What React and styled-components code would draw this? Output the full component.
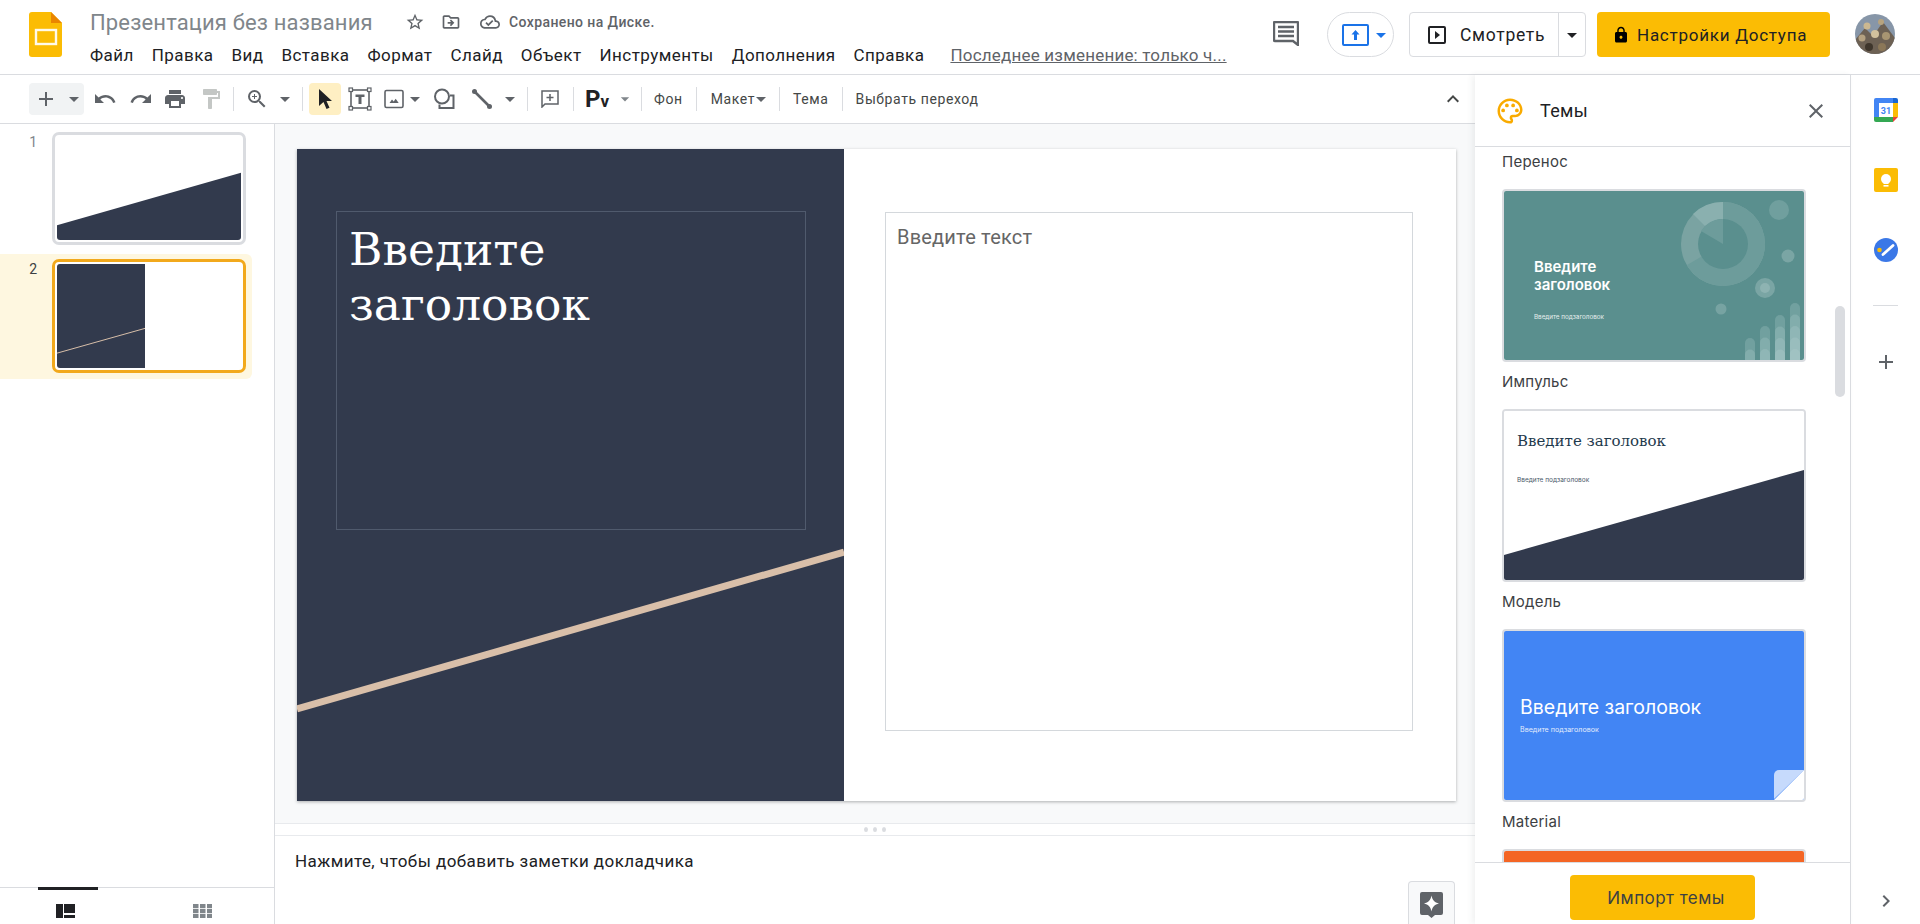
import React from 'react';
import styled, {createGlobalStyle} from 'styled-components';
import {
    MdAdd, MdUndo, MdRedo, MdPrint, MdFormatPaint, MdZoomIn, MdArrowDropDown, MdLock, MdClose,
    MdExpandLess, MdChevronRight, MdStarBorder, MdOutlineDriveFileMove, MdOutlineCloudDone, MdOutlinePalette
} from 'react-icons/md';

const GlobalStyle = createGlobalStyle`
    html, body {
        margin:0;
        padding:0;
        background:#fff;
        font-family:Roboto, "Liberation Sans", sans-serif;
        overflow:hidden;
    }
`;

const Page = styled.div`
    width:1920px;
    height:924px;
    display:flex;
    flex-direction:column;
    overflow:hidden;
    color:#202124;
`;

/* header */
const Header = styled.header`
    height:75px;
    box-sizing:border-box;
    border-bottom:1px solid #dadce0;
    display:flex;
    padding:12px 25px 0 29px;
    flex-shrink:0;
`;

const LogoMark = styled.svg`
    width:33px;
    height:45px;
    flex-shrink:0;
    margin-right:28px;
`;

const Titles = styled.div`
    display:flex;
    flex-direction:column;
    margin-top:-4px;
`;

const TitleRow = styled.div`
    height:28px;
    display:flex;
    align-items:center;
    color:#5f6368;
`;

const DocTitle = styled.div`
    font-size:22px;
    color:#80868b;
    letter-spacing:0.15px;
    width:282px;
    white-space:nowrap;
`;

const TitleIcon = styled.span`
    display:flex;
    margin-left:${p=>p.$ml}px;
    font-size:22px;
    width:20px;
    justify-content:center;
`;

const SavedText = styled.div`
    margin-left:9px;
    font-size:14px;
    font-weight:500;
    letter-spacing:0.4px;
    color:#5f6368;
    white-space:nowrap;
`;

const MenuBar = styled.nav`
    display:flex;
    align-items:center;
    gap:18px;
    margin-top:8px;
    height:22px;
    font-size:17px;
    letter-spacing:0.44px;
    white-space:nowrap;
`;

const LastEdit = styled.span`
    margin-left:8px;
    color:#5f6368;
    letter-spacing:0.2px;
    text-decoration:underline;
`;

const HeaderRight = styled.div`
    margin-left:auto;
    display:flex;
    align-items:flex-start;
`;

const ChatIcon = styled.svg`
    width:26px;
    height:25px;
    margin-top:9px;
`;

const PresentPill = styled.div`
    width:67px;
    height:45px;
    box-sizing:border-box;
    margin-left:28px;
    border:1px solid #dadce0;
    border-radius:23px;
    display:flex;
    align-items:center;
    padding-left:14px;
    color:#1a73e8;
    font-size:24px;
`;

const WatchButton = styled.div`
    width:177px;
    height:45px;
    box-sizing:border-box;
    margin-left:15px;
    border:1px solid #dadce0;
    border-radius:4px;
    display:flex;
    align-items:center;
    font-size:17.5px;
    letter-spacing:0.7px;
    color:#202124;
`;

const WatchMain = styled.div`
    width:149px;
    height:100%;
    box-sizing:border-box;
    display:flex;
    align-items:center;
    padding-left:18px;
    gap:14px;
    border-right:1px solid #dadce0;
`;

const WatchCaret = styled.div`
    flex:1;
    display:flex;
    justify-content:center;
    font-size:24px;
    color:#202124;
`;

const ShareButton = styled.div`
    width:233px;
    height:45px;
    box-sizing:border-box;
    margin-left:11px;
    background:#fbbc04;
    border-radius:4px;
    display:flex;
    align-items:center;
    padding-left:15px;
    gap:7px;
    font-size:17px;
    letter-spacing:0.75px;
    color:#202124;
    svg { font-size:18px; color:#000; flex-shrink:0; }
`;

const Avatar = styled.svg`
    width:40px;
    height:40px;
    margin:2px 0 0 25px;
    border-radius:50%;
`;

/* body */
const Body = styled.div`
    flex:1;
    display:flex;
    min-height:0;
`;

const MainColumn = styled.div`
    width:1475px;
    display:flex;
    flex-direction:column;
    flex-shrink:0;
`;

const Toolbar = styled.div`
    height:49px;
    box-sizing:border-box;
    flex-shrink:0;
    border-bottom:1px solid #dadce0;
    display:flex;
    align-items:center;
    padding:0 10px 0 29px;
    color:#5f6368;
    font-size:14px;
`;

const AddGroup = styled.div`
    display:flex;
    align-items:center;
    height:32px;
    margin-right:2px;
    background:#f1f3f4;
    border-radius:4px;
`;

const Tool = styled.div`
    width:${p=>p.$w}px;
    height:32px;
    display:flex;
    align-items:center;
    justify-content:center;
    flex-shrink:0;
    font-size:${p=>p.$size||24}px;
    color:${p=>p.$color||'#5f6368'};
    background:${p=>p.$active?'#feefc3':'transparent'};
    border-radius:4px;
    svg { flex-shrink:0; }
`;

const Sep = styled.div`
    width:1px;
    height:24px;
    background:#dadce0;
    flex-shrink:0;
    margin:0 ${p=>p.$r}px 0 ${p=>p.$l}px;
`;

const ToolText = styled.div`
    font-size:14px;
    color:#444746;
    letter-spacing:0.6px;
    white-space:nowrap;
`;

const FormatLetters = styled.span`
    font-size:24px;
    font-weight:700;
    line-height:1;
    color:#202124;
    small { font-size:17px; }
`;

const CollapseTool = styled.div`
    margin-left:auto;
    display:flex;
    font-size:24px;
    color:#444746;
`;

const Workspace = styled.div`
    flex:1;
    display:flex;
    min-height:0;
`;

const Filmstrip = styled.aside`
    width:275px;
    box-sizing:border-box;
    flex-shrink:0;
    border-right:1px solid #dadce0;
    display:flex;
    flex-direction:column;
`;

const FilmList = styled.div`
    flex:1;
    padding-top:3px;
    display:flex;
    flex-direction:column;
    gap:4px;
`;

const FilmRow = styled.div`
    width:252px;
    box-sizing:border-box;
    display:flex;
    padding:5px 0 ${p=>p.$active?6:5}px 0;
    background:${p=>p.$active?'#fef7e0':'transparent'};
    border-radius:0 6px 6px 0;
`;

const FilmNumber = styled.div`
    width:52px;
    box-sizing:border-box;
    padding-right:15px;
    margin-top:2px;
    text-align:right;
    font-size:14px;
    line-height:16px;
    color:${p=>p.$active?'#3c4043':'#80868b'};
`;

const Thumb = styled.div`
    width:194px;
    height:${p=>p.$active?114:113}px;
    box-sizing:border-box;
    border:3px solid ${p=>p.$active?'#f2a91c':'#dadce0'};
    border-radius:7px;
    padding:2px;
    background:#fff;
    svg { display:block; width:100%; height:100%; border-radius:3px; }
`;

const ViewTabs = styled.div`
    height:37px;
    box-sizing:border-box;
    border-top:1px solid #dadce0;
    display:flex;
    flex-shrink:0;
`;

const ViewTab = styled.div`
    flex:1;
    box-sizing:border-box;
    position:relative;
    display:flex;
    justify-content:center;
    padding:16px 6px 0 0;
    color:${p=>p.$active?'#202124':'#80868b'};
    &::before {
        content:"";
        display:${p=>p.$active?'block':'none'};
        position:absolute;
        left:38px;
        top:-1px;
        width:60px;
        height:3px;
        background:#202124;
    }
    svg { width:19px; height:14px; }
`;

const Editor = styled.div`
    flex:1;
    display:flex;
    flex-direction:column;
    min-width:0;
`;

const Canvas = styled.div`
    height:700px;
    box-sizing:border-box;
    flex-shrink:0;
    background:#f8f9fa;
    padding:25px 0 0 22px;
    border-bottom:1px solid #e8eaed;
`;

const Slide = styled.div`
    width:1159px;
    height:652px;
    display:flex;
    background:#fff;
    box-shadow:0 1px 3px rgba(60,64,67,.4);
`;

const DarkPane = styled.div`
    position:relative;
    width:547px;
    box-sizing:border-box;
    background:#323a4d;
    padding:62px 0 0 39px;
    overflow:hidden;
`;

const Stripe = styled.svg`
    position:absolute;
    left:0;
    top:0;
    width:547px;
    height:652px;
`;

const TitleBox = styled.div`
    width:470px;
    height:319px;
    box-sizing:border-box;
    border:1px solid #505a6d;
    padding:10px 0 0 12px;
    font-family:"DejaVu Serif", serif;
    font-size:45.5px;
    line-height:55px;
    color:#fff;
`;

const LightPane = styled.div`
    flex:1;
    padding:63px 0 0 41px;
`;

const TextBox = styled.div`
    width:528px;
    height:519px;
    box-sizing:border-box;
    border:1px solid #d4d8dc;
    padding:11px 0 0 11px;
    font-size:20px;
    line-height:26px;
    letter-spacing:0.2px;
    color:#666;
`;

const ResizeBar = styled.div`
    height:11px;
    flex-shrink:0;
    display:flex;
    align-items:center;
    justify-content:center;
    gap:5px;
    border-bottom:1px solid #e8eaed;
`;

const ResizeDot = styled.span`
    width:4px;
    height:5px;
    border-radius:50%;
    background:#dadce0;
`;

const Notes = styled.div`
    flex:1;
    position:relative;
    padding:14px 0 0 20px;
    font-size:17px;
    line-height:22px;
    letter-spacing:0.43px;
`;

const AssistButton = styled.div`
    position:absolute;
    right:20px;
    bottom:0;
    width:47px;
    height:43px;
    box-sizing:border-box;
    border:1px solid #dadce0;
    border-bottom:none;
    border-radius:4px 4px 0 0;
    background:#f8f9fa;
    display:flex;
    justify-content:center;
    padding-top:10px;
    svg { width:23px; height:26px; }
`;

/* themes */
const ThemePanel = styled.section`
    width:376px;
    box-sizing:border-box;
    flex-shrink:0;
    border-right:1px solid #dadce0;
    display:flex;
    flex-direction:column;
    position:relative;
    background:#fff;
    box-shadow:-3px 0 6px rgba(60,64,67,.07);
`;

const PanelHead = styled.div`
    height:72px;
    box-sizing:border-box;
    flex-shrink:0;
    border-bottom:1px solid #dadce0;
    display:flex;
    align-items:center;
    padding:0 22px 0 20px;
    font-size:18px;
    letter-spacing:0.3px;
    svg { flex-shrink:0; }
`;

const PanelTitle = styled.div`
    margin-left:15px;
    flex:1;
`;

const ThemeList = styled.div`
    flex:1;
    min-height:0;
    overflow:hidden;
    padding:5px 0 0 27px;
`;

const ThemeItem = styled.div`
    width:304px;
    margin-bottom:10px;
`;

const ThemeName = styled.div`
    height:20px;
    margin-bottom:17px;
    font-family:Inter, Roboto, sans-serif;
    font-size:15px;
    letter-spacing:0.25px;
    line-height:20px;
    color:#3c4043;
`;

const ThemeCard = styled.div`
    height:173px;
    box-sizing:border-box;
    border:2px solid #dadce0;
    border-radius:4px;
    overflow:hidden;
    background:#fff;
`;

const Preview = styled.div`
    position:relative;
    height:100%;
    box-sizing:border-box;
    overflow:hidden;
    background:${p=>p.$bg};
    color:${p=>p.$fg};
    padding:${p=>p.$pad};
`;

const PreviewArt = styled.svg`
    position:absolute;
    left:0;
    top:0;
    width:300px;
    height:169px;
`;

const PreviewTitle = styled.div`
    position:relative;
    font-family:${p=>p.$serif?'"DejaVu Serif", serif':'Inter, Roboto, sans-serif'};
    font-size:${p=>p.$size}px;
    font-weight:${p=>p.$weight||400};
    line-height:${p=>p.$line}px;
    white-space:nowrap;
`;

const PreviewSub = styled.div`
    position:relative;
    margin-top:${p=>p.$mt}px;
    font-family:Inter, Roboto, sans-serif;
    font-size:${p=>p.$size}px;
    line-height:10px;
    opacity:.85;
    white-space:nowrap;
`;

const ScrollThumb = styled.div`
    position:absolute;
    left:360px;
    top:231px;
    width:10px;
    height:91px;
    border-radius:5px;
    background:#dadce0;
`;

const PanelFoot = styled.div`
    height:62px;
    box-sizing:border-box;
    flex-shrink:0;
    border-top:1px solid #dadce0;
    display:flex;
    justify-content:center;
    padding:12px 0 0 0;
`;

const ImportButton = styled.div`
    width:185px;
    height:45px;
    box-sizing:border-box;
    padding-left:7px;
    border-radius:4px;
    background:#fbbc04;
    display:flex;
    align-items:center;
    justify-content:center;
    font-family:Inter, Roboto, sans-serif;
    font-size:17px;
    letter-spacing:0.45px;
    color:#3c4043;
`;

const Rail = styled.div`
    flex:1;
    display:flex;
    flex-direction:column;
    align-items:center;
    padding:23px 0 11px;
    box-sizing:border-box;
`;

const RailIcon = styled.svg`
    width:24px;
    height:24px;
    margin-top:${p=>p.$mt||0}px;
    flex-shrink:0;
`;

const RailRule = styled.div`
    width:25px;
    height:1px;
    margin-top:43px;
    background:#dadce0;
`;

const RailChevron = styled.div`
    margin-top:auto;
    display:flex;
    font-size:24px;
    color:#5f6368;
`;

const CalendarDay = styled.text`
    font-family:Roboto, sans-serif;
    font-size:9px;
    font-weight:700;
    fill:#4285f4;
`;

const SlidesLogo = () => (
    <LogoMark viewBox="0 0 33 45">
        <path d="M3 0h19l11 11v31a3 3 0 0 1-3 3H3a3 3 0 0 1-3-3V3a3 3 0 0 1 3-3z" fill="#fbbc04"/>
        <path d="M22 0l11 11H22z" fill="#ea8600"/>
        <rect x="7" y="18" width="20" height="14" fill="none" stroke="#fff" strokeWidth="2.4" opacity=".92"/>
    </LogoMark>
);

const CommentsGlyph = () => (
    <ChatIcon viewBox="0 0 26 25">
        <path d="M2 1h22a1 1 0 0 1 1 1v22l-5-4H2a1 1 0 0 1-1-1V2a1 1 0 0 1 1-1z" fill="none" stroke="#5f6368" strokeWidth="2.4"/>
        <path d="M5 6h16M5 10.500h16M5 15h16" stroke="#5f6368" strokeWidth="2.4"/>
    </ChatIcon>
);

const PresentGlyph = () => (
    <svg width="27" height="22" viewBox="0 0 27 22">
        <rect x="1" y="1" width="25" height="20" rx="1" fill="none" stroke="#1a73e8" strokeWidth="2"/>
        <path d="M13.500 6l4 4.500h-2.500V16h-3v-5.500H9.500z" fill="#1a73e8"/>
    </svg>
);

const PlayGlyph = () => (
    <svg width="18" height="18" viewBox="0 0 18 18">
        <rect x="1" y="1" width="16" height="16" rx="1" fill="none" stroke="#202124" strokeWidth="2"/>
        <path d="M7 5l5 4-5 4z" fill="#202124"/>
    </svg>
);

const PhotoAvatar = () => (
    <Avatar viewBox="0 0 40 40">
        <rect width="40" height="40" fill="#8796a8"/>
        <path d="M0 26 10 14l8 8 10-14 12 16v16H0z" fill="#6d6154"/>
        <circle cx="12" cy="12" r="3.500" fill="#cbb891"/>
        <circle cx="26" cy="8" r="3" fill="#b7a37e"/>
        <circle cx="20" cy="20" r="4" fill="#d2c19d"/>
        <circle cx="7" cy="24" r="3.500" fill="#b5a180"/>
        <circle cx="31" cy="22" r="4" fill="#a89572"/>
        <circle cx="14" cy="33" r="4" fill="#3f362c"/>
        <circle cx="27" cy="33" r="4" fill="#8b7758"/>
    </Avatar>
);

const CursorGlyph = () => (
    <svg width="22" height="24" viewBox="0 0 22 24">
        <path d="M5 2v17l4.500-4 3 7 3-1.300-3-6.700H18z" fill="#202124"/>
    </svg>
);

const TextBoxGlyph = () => (
    <svg width="24" height="24" viewBox="0 0 24 24" fill="none">
        <rect x="3" y="3" width="18" height="18" stroke="#5f6368" strokeWidth="1.600"/>
        <g fill="#fff" stroke="#5f6368" strokeWidth="1.200">
            <rect x="1" y="1" width="3.500" height="3.500"/>
            <rect x="19.500" y="1" width="3.500" height="3.500"/>
            <rect x="1" y="19.500" width="3.500" height="3.500"/>
            <rect x="19.500" y="19.500" width="3.500" height="3.500"/>
        </g>
        <path d="M7.500 7.500h9v2.500h-3v7h-3v-7h-3z" fill="#5f6368"/>
    </svg>
);

const ImageGlyph = () => (
    <svg width="20" height="20" viewBox="0 0 20 20" fill="none">
        <rect x="1" y="1.500" width="18" height="17" rx="1.500" stroke="#5f6368" strokeWidth="1.600"/>
        <path d="M5.500 14l2.500-3.500 1.700 2 2-2.800 3 4.300z" fill="#5f6368"/>
    </svg>
);

const ShapeGlyph = () => (
    <svg width="22" height="24" viewBox="0 0 22 24" fill="none">
        <circle cx="9" cy="9.500" r="7" stroke="#5f6368" strokeWidth="2"/>
        <path d="M17 8.500h3.500V21H6.500v-3.500" stroke="#5f6368" strokeWidth="2"/>
    </svg>
);

const LineGlyph = () => (
    <svg width="22" height="22" viewBox="0 0 22 22">
        <path d="M3.500 3.500l15 15" stroke="#5f6368" strokeWidth="2.600"/>
        <circle cx="3.500" cy="3.500" r="2.500" fill="#5f6368"/>
        <circle cx="18.500" cy="18.500" r="2.500" fill="#5f6368"/>
    </svg>
);

const AddCommentGlyph = () => (
    <svg width="18" height="18" viewBox="0 0 18 18" fill="none">
        <path d="M1 1h16v13H4l-3 3z" stroke="#5f6368" strokeWidth="1.500"/>
        <path d="M9 4v7M5.500 7.500h7" stroke="#5f6368" strokeWidth="1.500"/>
    </svg>
);

const PaletteGlyph = () => (
    <MdOutlinePalette size={30} color="#f9ab00"/>
);

const FilmstripViewGlyph = () => (
    <svg viewBox="0 0 19 14" fill="currentColor">
        <rect x="0" y="0" width="7" height="14"/>
        <rect x="8" y="0" width="11" height="9"/>
        <rect x="8" y="11" width="11" height="3"/>
    </svg>
);

const GridViewGlyph = () => (
    <svg viewBox="0 0 19 14" fill="currentColor">
        {[0,7,14].map(x=>[0,5,10].map(y=>(
            <rect key={x+'-'+y} x={x} y={y} width="5.500" height={4.200}/>
        )))}
    </svg>
);

const AssistGlyph = () => (
    <svg viewBox="0 0 23 26">
        <path d="M2 0h19a2 2 0 0 1 2 2v19a2 2 0 0 1-2 2h-6l-3.500 3L8 23H2a2 2 0 0 1-2-2V2a2 2 0 0 1 2-2z" fill="#5f6368"/>
        <path d="M11.500 3.500c.8 4.500 3 7 7.500 8-4.500 1-6.700 3.500-7.500 8-.8-4.500-3-7-7.500-8 4.500-1 6.700-3.500 7.500-8z" fill="#fff"/>
    </svg>
);

const CalendarGlyph = () => (
    <RailIcon viewBox="0 0 24 24">
        <path d="M2 0h20v5H5v14H0V2a2 2 0 0 1 2-2z" fill="#4285f4"/>
        <path d="M19 0h3a2 2 0 0 1 2 2v3h-5z" fill="#1967d2"/>
        <path d="M19 5h5v14h-5z" fill="#fbbc04"/>
        <path d="M5 19h14v5H2a2 2 0 0 1-2-2v-3z" fill="#34a853"/>
        <path d="M19 19h5l-5 5z" fill="#ea4335"/>
        <CalendarDay x="12" y="15.500" textAnchor="middle">31</CalendarDay>
    </RailIcon>
);

const KeepGlyph = () => (
    <RailIcon $mt={46} viewBox="0 0 24 24">
        <rect width="24" height="24" rx="2" fill="#fbbc04"/>
        <circle cx="12" cy="11" r="5" fill="#fff"/>
        <rect x="9.500" y="14" width="5" height="2" fill="#fff"/>
        <rect x="9.500" y="17" width="5" height="1.600" fill="#fff"/>
    </RailIcon>
);

const TasksGlyph = () => (
    <RailIcon $mt={46} viewBox="0 0 24 24">
        <circle cx="12" cy="12" r="12" fill="#3b78e7"/>
        <path d="M9 16.500L19 7.500" stroke="#fff" strokeWidth="2.800" strokeLinecap="round"/>
        <circle cx="5.500" cy="12" r="2.300" fill="#fbbc04"/>
    </RailIcon>
);

const PULSE_BARS = [[241,147],[256,135],[271,124],[286,112]];

const PulseArt = () => (
    <PreviewArt viewBox="0 0 300 169">
        <circle cx="219" cy="53" r="42" fill="#7aa3a2"/>
        <path d="M219 11a42 42 0 0 1 0 84 42 42 0 0 1-36-21l36-21z" fill="#6d9c9b"/>
        <path d="M219 11a42 42 0 0 0-30 12l30 30z" fill="#8ab0af"/>
        <circle cx="219" cy="53" r="25" fill="#5a8f8e"/>
        <path d="M219 28v25l-22-13a25 25 0 0 1 22-12z" fill="#6d9c9b"/>
        <circle cx="275" cy="19" r="10" fill="#709f9e"/>
        <circle cx="284" cy="65" r="6.500" fill="#7aa5a4"/>
        <circle cx="261" cy="97" r="10" fill="#7aa5a4"/>
        <circle cx="261" cy="97" r="5" fill="#8eb3b2"/>
        <circle cx="217" cy="118" r="5.500" fill="#77a3a2"/>
        {PULSE_BARS.map(([x,top])=>{
            const bands=[];
            for(let y=top;y<169;y+=11.5) bands.push(y);
            return bands.map(y=>(
                <rect key={x+'-'+y} x={x} y={y} width="10" height={175-y} rx="5" fill="#b9d4d2" opacity=".25"/>
            ));
        })}
    </PreviewArt>
);

const ModelArt = () => (
    <PreviewArt viewBox="0 0 300 169">
        <path d="M0 144L300 59v110H0z" fill="#323a4d"/>
    </PreviewArt>
);

const MaterialArt = () => (
    <PreviewArt viewBox="0 0 300 169">
        <path d="M270 168v-24a5 5 0 0 1 5-5h25z" fill="#c6dafc"/>
        <path d="M270 169l30-30v30z" fill="#fff"/>
    </PreviewArt>
);

function App(){
    return(
        <Page>
            <GlobalStyle/>
            <Header>
                <SlidesLogo/>
                <Titles>
                    <TitleRow>
                        <DocTitle>Презентация без названия</DocTitle>
                        <TitleIcon $ml={33}><MdStarBorder/></TitleIcon>
                        <TitleIcon $ml={16}><MdOutlineDriveFileMove/></TitleIcon>
                        <TitleIcon $ml={19}><MdOutlineCloudDone/></TitleIcon>
                        <SavedText>Сохранено на Диске.</SavedText>
                    </TitleRow>
                    <MenuBar>
                        <span>Файл</span>
                        <span>Правка</span>
                        <span>Вид</span>
                        <span>Вставка</span>
                        <span>Формат</span>
                        <span>Слайд</span>
                        <span>Объект</span>
                        <span>Инструменты</span>
                        <span>Дополнения</span>
                        <span>Справка</span>
                        <LastEdit>Последнее изменение: только ч...</LastEdit>
                    </MenuBar>
                </Titles>
                <HeaderRight>
                    <CommentsGlyph/>
                    <PresentPill><PresentGlyph/><MdArrowDropDown/></PresentPill>
                    <WatchButton>
                        <WatchMain><PlayGlyph/>Смотреть</WatchMain>
                        <WatchCaret><MdArrowDropDown/></WatchCaret>
                    </WatchButton>
                    <ShareButton><MdLock/>Настройки Доступа</ShareButton>
                    <PhotoAvatar/>
                </HeaderRight>
            </Header>
            <Body>
                <MainColumn>
                    <Toolbar>
                        <AddGroup>
                            <Tool $w={34}><MdAdd/></Tool>
                            <Tool $w={21}><MdArrowDropDown/></Tool>
                        </AddGroup>
                        <Tool $w={38}><MdUndo/></Tool>
                        <Tool $w={34}><MdRedo/></Tool>
                        <Tool $w={34}><MdPrint/></Tool>
                        <Tool $w={38} $color="#c4c7c5"><MdFormatPaint/></Tool>
                        <Sep $l={3} $r={2}/>
                        <Tool $w={42}><MdZoomIn/></Tool>
                        <Tool $w={14}><MdArrowDropDown/></Tool>
                        <Sep $l={10} $r={6}/>
                        <Tool $w={32} $active><CursorGlyph/></Tool>
                        <Tool $w={38}><TextBoxGlyph/></Tool>
                        <Tool $w={30}><ImageGlyph/></Tool>
                        <Tool $w={12}><MdArrowDropDown/></Tool>
                        <Tool $w={46}><ShapeGlyph/></Tool>
                        <Tool $w={30}><LineGlyph/></Tool>
                        <Tool $w={26}><MdArrowDropDown/></Tool>
                        <Sep $l={4} $r={4}/>
                        <Tool $w={36}><AddCommentGlyph/></Tool>
                        <Sep $l={5} $r={5}/>
                        <Tool $w={36}><FormatLetters>P<small>v</small></FormatLetters></Tool>
                        <Tool $w={20} $color="#80868b" $size={20}><MdArrowDropDown/></Tool>
                        <Sep $l={6} $r={12}/>
                        <ToolText>Фон</ToolText>
                        <Sep $l={13} $r={14}/>
                        <ToolText>Макет</ToolText>
                        <Tool $w={12}><MdArrowDropDown/></Tool>
                        <Sep $l={12} $r={13}/>
                        <ToolText>Тема</ToolText>
                        <Sep $l={13} $r={13}/>
                        <ToolText>Выбрать переход</ToolText>
                        <CollapseTool><MdExpandLess/></CollapseTool>
                    </Toolbar>
                    <Workspace>
                        <Filmstrip>
                            <FilmList>
                                <FilmRow>
                                    <FilmNumber>1</FilmNumber>
                                    <Thumb>
                                        <svg viewBox="0 0 184 104" preserveAspectRatio="none">
                                            <path d="M0 89L184 36v68H0z" fill="#323a4d"/>
                                        </svg>
                                    </Thumb>
                                </FilmRow>
                                <FilmRow $active>
                                    <FilmNumber $active>2</FilmNumber>
                                    <Thumb $active>
                                        <svg viewBox="0 0 184 105" preserveAspectRatio="none">
                                            <rect width="88" height="105" fill="#323a4d"/>
                                            <path d="M0 90L88 65" stroke="#d9bfa9" strokeWidth="1"/>
                                        </svg>
                                    </Thumb>
                                </FilmRow>
                            </FilmList>
                            <ViewTabs>
                                <ViewTab $active><FilmstripViewGlyph/></ViewTab>
                                <ViewTab><GridViewGlyph/></ViewTab>
                            </ViewTabs>
                        </Filmstrip>
                        <Editor>
                            <Canvas>
                                <Slide>
                                    <DarkPane>
                                        <Stripe viewBox="0 0 547 652">
                                            <path d="M0 560L547 403" stroke="#d9bfa9" strokeWidth="7"/>
                                        </Stripe>
                                        <TitleBox>Введите<br/>заголовок</TitleBox>
                                    </DarkPane>
                                    <LightPane>
                                        <TextBox>Введите текст</TextBox>
                                    </LightPane>
                                </Slide>
                            </Canvas>
                            <ResizeBar><ResizeDot/><ResizeDot/><ResizeDot/></ResizeBar>
                            <Notes>
                                Нажмите, чтобы добавить заметки докладчика
                                <AssistButton><AssistGlyph/></AssistButton>
                            </Notes>
                        </Editor>
                    </Workspace>
                </MainColumn>
                <ThemePanel>
                    <PanelHead>
                        <PaletteGlyph/>
                        <PanelTitle>Темы</PanelTitle>
                        <MdClose size={24} color="#5f6368"/>
                    </PanelHead>
                    <ThemeList>
                        <ThemeItem>
                            <ThemeName>Перенос</ThemeName>
                            <ThemeCard>
                                <Preview $bg="#5a8f8e" $fg="#fff" $pad="67px 0 0 30px">
                                    <PulseArt/>
                                    <PreviewTitle $size={15} $line={18} $weight={600}>Введите<br/>заголовок</PreviewTitle>
                                    <PreviewSub $mt={18} $size={6.3}>Введите подзаголовок</PreviewSub>
                                </Preview>
                            </ThemeCard>
                        </ThemeItem>
                        <ThemeItem>
                            <ThemeName>Импульс</ThemeName>
                            <ThemeCard>
                                <Preview $bg="#fff" $fg="#1f3a4d" $pad="21px 0 0 13px">
                                    <ModelArt/>
                                    <PreviewTitle $serif $size={15} $line={18}>Введите заголовок</PreviewTitle>
                                    <PreviewSub $mt={25} $size={6.5}>Введите подзаголовок</PreviewSub>
                                </Preview>
                            </ThemeCard>
                        </ThemeItem>
                        <ThemeItem>
                            <ThemeName>Модель</ThemeName>
                            <ThemeCard>
                                <Preview $bg="#4285f4" $fg="#fff" $pad="64px 0 0 16px">
                                    <MaterialArt/>
                                    <PreviewTitle $size={19.5} $line={24}>Введите заголовок</PreviewTitle>
                                    <PreviewSub $mt={6} $size={7.1}>Введите подзаголовок</PreviewSub>
                                </Preview>
                            </ThemeCard>
                        </ThemeItem>
                        <ThemeItem>
                            <ThemeName>Material</ThemeName>
                            <ThemeCard>
                                <Preview $bg="#f46524" $fg="#fff" $pad="0"/>
                            </ThemeCard>
                        </ThemeItem>
                    </ThemeList>
                    <ScrollThumb/>
                    <PanelFoot><ImportButton>Импорт темы</ImportButton></PanelFoot>
                </ThemePanel>
                <Rail>
                    <CalendarGlyph/>
                    <KeepGlyph/>
                    <TasksGlyph/>
                    <RailRule/>
                    <RailIcon $mt={44} viewBox="0 0 24 24">
                        <path d="M11 5h2v6h6v2h-6v6h-2v-6H5v-2h6z" fill="#5f6368"/>
                    </RailIcon>
                    <RailChevron><MdChevronRight/></RailChevron>
                </Rail>
            </Body>
        </Page>
    );
}

export default App;
